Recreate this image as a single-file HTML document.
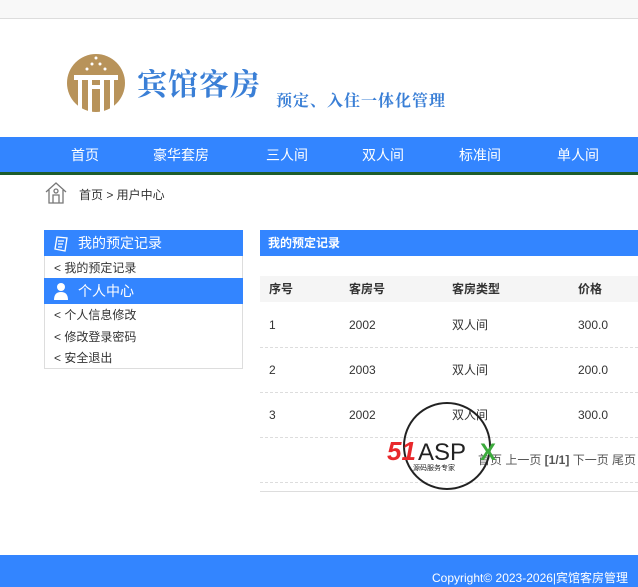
<!DOCTYPE html>
<html><head><meta charset="utf-8"><style>
*{margin:0;padding:0;box-sizing:border-box}
body{width:638px;height:587px;overflow:hidden;background:#fff;font-family:"Liberation Sans","Noto Sans CJK SC",sans-serif;font-size:13px;color:#333;position:relative;line-height:16px}
.abs{position:absolute}
.nav a{position:absolute;top:147px;color:#fff;font-size:14px;white-space:nowrap}
.sh{background:#3385ff;color:#fff;font-size:14px;height:26px;line-height:26px;padding-left:34px;position:absolute;left:44px;width:199px}
.si{position:absolute;left:54px;font-size:12px;color:#333}
.row{position:absolute;left:269px;font-size:12px;color:#333;line-height:16px}
.dash{position:absolute;left:260px;width:378px;border-top:1px dashed #ddd}
</style></head><body>
<div class="abs" style="left:0;top:0;width:638px;height:19px;background:#f8f8f8;border-bottom:1px solid #ddd"></div>
<svg class="abs" style="left:64px;top:53px" width="64" height="60" viewBox="0 0 64 60">
<circle cx="32" cy="30" r="29" fill="#b8935a"/>
<rect x="10" y="22" width="44" height="5" fill="#fff"/>
<rect x="14" y="27" width="4" height="30" fill="#fff"/><rect x="24" y="27" width="4" height="32" fill="#fff"/><rect x="36" y="27" width="4" height="32" fill="#fff"/><rect x="46" y="27" width="4" height="30" fill="#fff"/>
<rect x="28" y="32" width="8" height="4" fill="#fff"/>
<circle cx="32" cy="5" r="1.5" fill="#fff"/><circle cx="28" cy="11" r="1.5" fill="#fff"/><circle cx="36" cy="11" r="1.5" fill="#fff"/><circle cx="23" cy="16" r="1.5" fill="#fff"/><circle cx="41" cy="16" r="1.5" fill="#fff"/>
</svg>
<div class="abs" style="left:137px;top:62px;font-size:30px;line-height:40px;color:#3a7fd6;font-family:'Noto Serif CJK SC',serif;font-weight:bold;letter-spacing:1px">宾馆客房</div>
<div class="abs" style="left:276px;top:90px;font-size:16px;line-height:20px;color:#3a7fd6;font-family:'Noto Serif CJK SC',serif;font-weight:bold;letter-spacing:1px">预定、入住一体化管理</div>
<div class="abs" style="left:0;top:137px;width:638px;height:35px;background:#3385ff"></div>
<div class="abs" style="left:0;top:172px;width:638px;height:3px;background:#1d5c2b"></div>
<div class="nav"><a style="left:71px">首页</a><a style="left:153px">豪华套房</a><a style="left:266px">三人间</a><a style="left:362px">双人间</a><a style="left:459px">标准间</a><a style="left:557px">单人间</a></div>
<svg class="abs" style="left:44px;top:181px" width="24" height="24" viewBox="0 0 24 24" fill="none" stroke="#777" stroke-width="1.3"><path d="M2 11 L12 2 L22 11 M5 9 V22 H19 V9"/><circle cx="12" cy="10" r="2"/><path d="M9 22 V14 H15 V22"/></svg>
<div class="abs" style="left:79px;top:187px;font-size:12px;color:#333">首页 &gt; 用户中心</div>
<div class="abs" style="left:44px;top:230px;width:199px;height:139px;border:1px solid #ddd"></div>
<div class="sh" style="top:230px">我的预定记录</div>
<svg class="abs" style="left:53px;top:235px" width="16" height="17" viewBox="0 0 16 17" fill="none" stroke="#fff" stroke-width="1.3"><path d="M4 2 L14 3 L12 16 L2 14 Z M5 6 H11 M5 9 H10 M5 12 H9"/></svg>
<div class="si" style="top:260px">&lt; 我的预定记录</div>
<div class="sh" style="top:278px">个人中心</div>
<svg class="abs" style="left:53px;top:282px" width="16" height="18" viewBox="0 0 16 18" fill="#fff"><circle cx="8" cy="5" r="4"/><path d="M1 18 Q1 10 8 10 Q15 10 15 18 Z"/></svg>
<div class="si" style="top:307px">&lt; 个人信息修改</div>
<div class="si" style="top:329px">&lt; 修改登录密码</div>
<div class="si" style="top:350px">&lt; 安全退出</div>
<div class="abs" style="left:260px;top:230px;width:378px;height:26px;background:#3385ff;color:#fff;font-size:12px;font-weight:bold;line-height:26px;padding-left:8px">我的预定记录</div>
<div class="abs" style="left:260px;top:276px;width:378px;height:26px;background:#f5f5f5"></div>
<div class="row" style="top:281px;font-weight:bold">序号</div><div class="row" style="left:349px;top:281px;font-weight:bold">客房号</div><div class="row" style="left:452px;top:281px;font-weight:bold">客房类型</div><div class="row" style="left:578px;top:281px;font-weight:bold">价格</div>
<div class="row" style="top:317px">1</div><div class="row" style="left:349px;top:317px">2002</div><div class="row" style="left:452px;top:317px">双人间</div><div class="row" style="left:578px;top:317px">300.0</div>
<div class="dash" style="top:347px"></div>
<div class="row" style="top:362px">2</div><div class="row" style="left:349px;top:362px">2003</div><div class="row" style="left:452px;top:362px">双人间</div><div class="row" style="left:578px;top:362px">200.0</div>
<div class="dash" style="top:392px"></div>
<div class="row" style="top:407px">3</div><div class="row" style="left:349px;top:407px">2002</div><div class="row" style="left:452px;top:407px">双人间</div><div class="row" style="left:578px;top:407px">300.0</div>
<div class="dash" style="top:437px"></div>
<div class="row" style="left:478px;top:452px;color:#555;white-space:nowrap">首页 上一页 <b>[1/1]</b> 下一页 尾页</div>
<div class="dash" style="top:482px"></div>
<div class="abs" style="left:260px;top:491px;width:378px;border-top:1px solid #ddd"></div>
<svg class="abs" style="left:385px;top:400px" width="130" height="95" viewBox="0 0 130 95"><circle cx="62" cy="46" r="43" fill="none" stroke="#222" stroke-width="2"/><text x="2" y="60" font-family="Liberation Sans" font-weight="bold" font-style="italic" font-size="26" fill="#e8282b">51</text><text x="33" y="60" font-family="Liberation Sans" font-size="24" fill="#222">ASP</text><text x="95" y="60" font-family="Liberation Sans" font-weight="bold" font-size="24" fill="#3caa3c">X</text><text x="28" y="70" font-size="7" fill="#222" font-family="Noto Sans CJK SC">源码服务专家</text></svg>
<div class="abs" style="left:0;top:555px;width:638px;height:32px;background:#3385ff"></div>
<div class="abs" style="left:432px;top:570px;color:#fff;font-size:12px;white-space:nowrap">Copyright© 2023-2026|宾馆客房管理</div>
</body></html>
